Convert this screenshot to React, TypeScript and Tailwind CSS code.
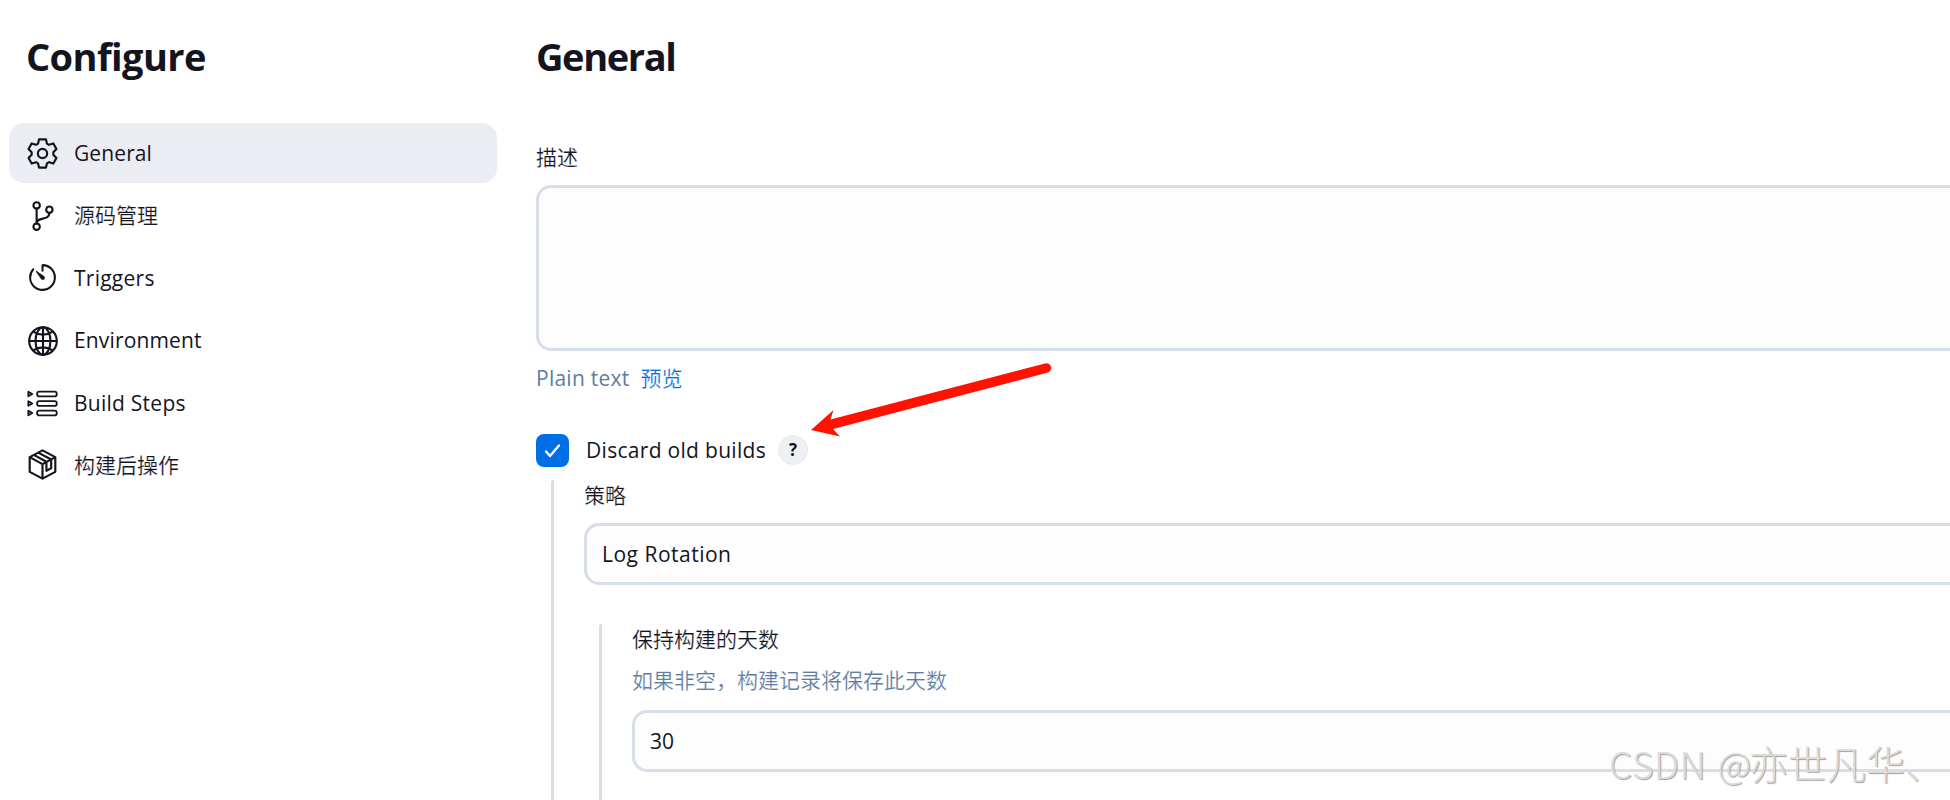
import { clsx } from 'clsx';
import {
  IoGitBranchOutline,
  IoGlobeOutline,
  IoTimerOutline,
} from 'react-icons/io5';

/* ------------------------------------------------------------------ */
/*  Icons                                                              */
/* ------------------------------------------------------------------ */
function GearIcon({ className }: { className?: string }) {
  return (
    <svg viewBox="0 0 30 30" className={className} fill="none" stroke="currentColor" strokeWidth="2.1" strokeLinejoin="round">
      <path d="M11.700 1.300h6.600l1 4.100 2 1.200 4.200-1.300 3 5.300-3 3.100v2.600l3 3.100-3 5.300-4.200-1.300-2 1.200-1 4.100h-6.600l-1-4.100-2-1.200-4.200 1.300-3-5.300 3-3.100v-2.600l-3-3.100 3-5.300 4.200 1.300 2-1.200z" />
      <circle cx="15" cy="15" r="4.500" />
    </svg>
  );
}

function StepsIcon({ className }: { className?: string }) {
  return (
    <svg viewBox="0 0 30 30" className={className} fill="none" stroke="currentColor" strokeWidth="1.8" strokeLinejoin="round">
      {[5.8, 15, 24.2].map((y) => (
        <g key={y}>
          <path d={`M1.3 ${y - 2.2}v4.4l3.8-2.2z`} />
          <rect x="9.800" y={y - 2.3} width="19" height="4.600" rx="2.100" />
        </g>
      ))}
    </svg>
  );
}

function PackageIcon({ className }: { className?: string }) {
  return (
    <svg viewBox="0 0 30 30" className={className} fill="none" stroke="currentColor" strokeWidth="2.1" strokeLinejoin="round">
      <path d="M15 1.300l12.400 6.600v14.200L15 28.700 2.600 22.100V7.900z" />
      <path d="M2.600 7.900L15 14.600l12.400-6.700M15 14.600v14.100M6.600 5.700l12.200 6.700v8.700l4.600-2.400v-8.500L10.800 3.500" />
    </svg>
  );
}

/* ------------------------------------------------------------------ */
/*  Data                                                               */
/* ------------------------------------------------------------------ */
const THIN_CJK = '[-webkit-text-stroke:0.2px_white]';

const sections = [
  { label: 'General', icon: GearIcon, size: 'size-[31px]', active: true, text: 'tracking-[0.1px]' },
  { label: '源码管理', icon: IoGitBranchOutline, size: 'size-[34px]', text: `-mt-[2px] ${THIN_CJK}` },
  { label: 'Triggers', icon: IoTimerOutline, size: 'size-[33px] -mt-px', text: 'tracking-[0.25px]' },
  { label: 'Environment', icon: IoGlobeOutline, size: 'size-[34px]', text: 'tracking-[0.15px] -mt-px' },
  { label: 'Build Steps', icon: StepsIcon, size: 'size-[31px]', text: 'tracking-[0.25px]' },
  { label: '构建后操作', icon: PackageIcon, size: 'size-[31px] -mt-[2px]', text: `-mt-[2px] ${THIN_CJK}` },
];

function Sidebar() {
  return (
    <aside className="w-[497px] shrink-0 pl-[9px]">
      <h1 className="mt-[29px] pl-[17px] text-[38px] leading-[54px] font-bold tracking-[-0.6px]">Configure</h1>
      <nav className="mt-[40px] flex flex-col gap-[2.5px]">
        {sections.map(({ label, icon: Icon, size, active, text }) => (
          <a
            key={label}
            className={clsx('flex h-[60px] items-center gap-[16px] rounded-[15px] pl-[18px]', active && 'bg-[#ecedf3]')}
          >
            <span className="flex size-[31px] shrink-0 items-center justify-center">
              <Icon className={clsx('shrink-0', size)} />
            </span>
            <span className={text}>{label}</span>
          </a>
        ))}
      </nav>
    </aside>
  );
}

function Field({ children, className }: { children?: React.ReactNode; className?: string }) {
  return (
    <div className={clsx('rounded-l-[15px] border-3 border-r-0 border-[#d7dee8] bg-[#fdfdfd]', className)}>
      {children}
    </div>
  );
}

/* ------------------------------------------------------------------ */
/*  Page                                                               */
/* ------------------------------------------------------------------ */
export default function App() {
  return (
    <div className="relative flex h-[800px] w-full overflow-hidden bg-white font-['Open_Sans','Noto_Sans_CJK_SC',sans-serif] text-[21px] leading-[30px] font-normal text-[#14141f]">
      <Sidebar />

      <main className="min-w-0 flex-1 pl-[39px]">
        <h2 className="mt-[29px] text-[38px] leading-[54px] font-bold tracking-[-1.4px]">General</h2>
        <div className={clsx('mt-[59px]', THIN_CJK)}>描述</div>
        <Field className="mt-[13px] h-[166px]" />
        <div className="mt-[12px] flex gap-[11px]">
          <span className="tracking-[0.25px] text-[#607c9f]">Plain text</span>
          <a className={clsx('text-[#006fe6]', THIN_CJK)}>预览</a>
        </div>

        <div className="mt-[41px] flex h-[33px] items-center">
          <span className="flex size-[33px] items-center justify-center rounded-[8px] bg-[#006fe6]">
            <svg viewBox="0 0 33 33" className="size-[33px]" fill="none" stroke="white" strokeWidth="2.4" strokeLinecap="round" strokeLinejoin="round">
              <path d="M10 17.500l4 4.500L23 11.500" />
            </svg>
          </span>
          <span className="-mt-[2px] ml-[17px] tracking-[0.3px]">Discard old builds</span>
          <span className="-mt-px ml-[12px] flex size-[30px] items-center justify-center rounded-full border border-[#e6ebf0] bg-[#edf1f5] text-[17px] font-bold">
            ?
          </span>
        </div>

        <div className="mt-[13px] ml-[15px] h-[340px] rounded-t-[2px] border-l-3 border-[#d7dee8] pl-[30px]">
          <div className={THIN_CJK}>策略</div>
          <Field className="mt-[13px] flex h-[62px] items-center pl-[15px] tracking-[0.5px]">Log Rotation</Field>
          <div className="mt-[39px] ml-[15px] h-[200px] rounded-t-[2px] border-l-3 border-[#d7dee8] pl-[30px]">
            <div className={THIN_CJK}>保持构建的天数</div>
            <div className={clsx('mt-[11px] text-[#607c9f]', THIN_CJK)}>如果非空，构建记录将保存此天数</div>
            <Field className="mt-[15px] flex h-[62px] items-center pl-[15px]">30</Field>
          </div>
        </div>
      </main>

      {/* Arrow pointing at the help button */}
      <svg className="absolute top-[360px] left-[808px] h-[80px] w-[246px]" viewBox="0 0 246 80">
        <path d="M3 70L25.500 50l-3 9.500L237 3.500a4.600 4.600 0 0 1 3 9L25 69l7 7.500z" fill="#ff1200" />
      </svg>

      <div className="absolute top-[735px] left-[1609px] font-['Noto_Sans_CJK_SC',sans-serif] text-[37px] leading-[54px] font-light whitespace-nowrap text-[#dcdcdc] [text-shadow:1px_1px_1px_#a0a0a0]">
        <span className="tracking-[0.6px]">CSDN</span> <span className="ml-[3px] tracking-[-2px]">@</span>
        <span className="text-[39px]">亦世凡华、</span>
      </div>
    </div>
  );
}
